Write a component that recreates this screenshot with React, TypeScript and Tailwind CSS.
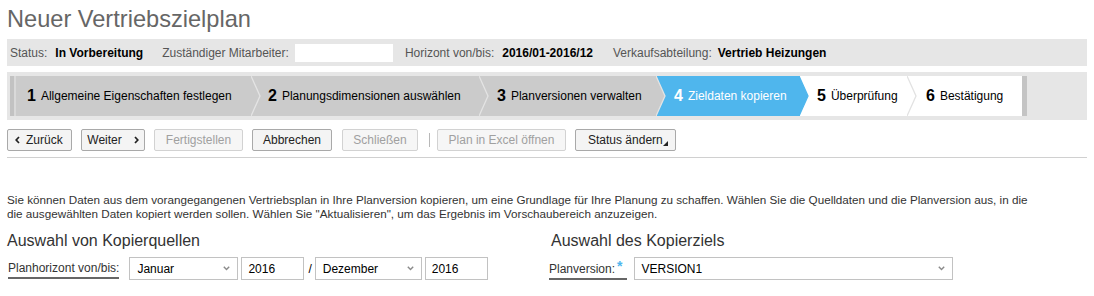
import React from "react";

type StepDef = {
  n: string;
  label: string;
  cls: string;
  fill?: string;
  stroke?: string;
};

const steps: StepDef[] = [
  { n: "1", label: "Allgemeine Eigenschaften festlegen", cls: "w-[236px] bg-[#cbcbcb] text-black pl-[11px]", fill: "#cbcbcb", stroke: "#e4e4e4" },
  { n: "2", label: "Planungsdimensionen auswählen", cls: "w-[228px] bg-[#cbcbcb] text-black pl-[16px]", fill: "#cbcbcb", stroke: "#e4e4e4" },
  { n: "3", label: "Planversionen verwalten", cls: "w-[177px] bg-[#cbcbcb] text-black pl-[17px]", fill: "#cbcbcb", stroke: "#e4e4e4" },
  { n: "4", label: "Zieldaten kopieren", cls: "w-[143px] bg-[#4fb6ed] text-white pl-[17px]", fill: "#4fb6ed", stroke: "#4fb6ed" },
  { n: "5", label: "Überprüfung", cls: "w-[108px] bg-white text-black pl-[17px]", fill: "#ffffff", stroke: "#e2e2e2" },
  { n: "6", label: "Bestätigung", cls: "w-[114px] bg-white text-black pl-[18px]" },
];

function Step({ s }: { s: StepDef }) {
  return (
    <div className={`relative h-[40px] flex items-center shrink-0 ${s.cls}`}>
      <span className="text-[16px] font-bold leading-none mr-[5px]">{s.n}</span>
      <span className="text-[12px] leading-none">{s.label}</span>
      {s.fill && (
        <svg className="absolute right-[-9px] top-0 z-10" width="10" height="40" viewBox="0 0 10 40">
          <polygon points="0,0 9,20 0,40" fill={s.fill} />
          <polyline points="0,0 9,20 0,40" fill="none" stroke={s.stroke} strokeWidth="1.3" />
        </svg>
      )}
    </div>
  );
}

function Btn({
  children,
  cls,
  disabled,
}: {
  children: React.ReactNode;
  cls: string;
  disabled?: boolean;
}) {
  return (
    <div
      className={`relative h-[22px] flex items-center justify-center rounded-[2px] border text-[12px] shrink-0 ${
        disabled
          ? "border-[#d2d2d2] bg-[#f6f6f6] text-[#a0a0a0]"
          : "border-[#a9a9a9] bg-[#f4f4f4] text-[#222]"
      } ${cls}`}
    >
      {children}
    </div>
  );
}

function SmallChevron({ dir }: { dir: "l" | "r" }) {
  return (
    <svg width="5" height="8" viewBox="0 0 5 8">
      <path
        d={dir === "l" ? "M4 1 L1.2 4 L4 7" : "M1 1 L3.8 4 L1 7"}
        fill="none"
        stroke="#222"
        strokeWidth="1.7"
      />
    </svg>
  );
}

function DropChevron() {
  return (
    <svg width="7" height="5" viewBox="0 0 7 5">
      <path d="M0.8 0.8 L3.5 3.6 L6.2 0.8" fill="none" stroke="#8a8a8a" strokeWidth="1.4" />
    </svg>
  );
}

function Select({ value, cls }: { value: string; cls: string }) {
  return (
    <div className={`h-[23px] border border-[#c2c2c2] bg-white flex items-center justify-between pl-[7px] pr-[7px] text-[12px] text-black shrink-0 ${cls}`}>
      <span>{value}</span>
      <DropChevron />
    </div>
  );
}

function Input({ value, cls }: { value: string; cls: string }) {
  return (
    <div className={`h-[23px] border border-[#c2c2c2] bg-white flex items-center pl-[6px] text-[12px] text-black shrink-0 ${cls}`}>
      {value}
    </div>
  );
}

export default function App() {
  return (
    <div className="w-[1094px] h-[296px] bg-white overflow-hidden font-['Liberation_Sans',Arial,sans-serif] text-[#333] px-[7px]">
      <h1 className="pt-[5px] text-[23.6px] leading-[28px] text-[#666] font-normal">
        Neuer Vertriebszielplan
      </h1>

      <div className="mt-[6px] h-[27px] bg-[#e6e6e6] flex items-center pl-[3px] text-[12px]">
        <span className="text-[#555]">Status:</span>
        <span className="ml-[8px] font-bold text-black">In Vorbereitung</span>
        <span className="ml-[19px] text-[#555]">Zuständiger Mitarbeiter:</span>
        <span className="ml-[6px] w-[98px] h-[18px] bg-white"></span>
        <span className="ml-[12px] text-[#555]">Horizont von/bis:</span>
        <span className="ml-[8px] font-bold text-black">2016/01-2016/12</span>
        <span className="ml-[20px] text-[#555]">Verkaufsabteilung:</span>
        <span className="ml-[6px] font-bold text-black">Vertrieb Heizungen</span>
      </div>

      <div className="mt-[6px] h-[48px] bg-[#e6e6e6] flex items-center pl-[3px]">
        <div className="w-[4px] h-[40px] bg-[#c2c2c2] shrink-0"></div>
        <div className="w-[2px] h-[40px] bg-[#d9d9d9] shrink-0"></div>
        {steps.map((s) => (
          <Step key={s.n} s={s} />
        ))}
        <div className="w-[5px] h-[40px] bg-[#c4c4c4] shrink-0"></div>
      </div>

      <div className="mt-[9px] flex items-center">
        <Btn cls="w-[65px] gap-[6px] !justify-start pl-[7px]">
          <SmallChevron dir="l" />
          <span>Zurück</span>
        </Btn>
        <Btn cls="ml-[9px] w-[64px] gap-[12px]">
          <span>Weiter</span>
          <SmallChevron dir="r" />
        </Btn>
        <Btn cls="ml-[9px] w-[89px]" disabled>
          Fertigstellen
        </Btn>
        <Btn cls="ml-[9px] w-[80px]">Abbrechen</Btn>
        <Btn cls="ml-[10px] w-[76px]" disabled>
          Schließen
        </Btn>
        <div className="ml-[11px] w-px h-[14px] bg-[#b8b8b8] shrink-0"></div>
        <Btn cls="ml-[7px] w-[129px]" disabled>
          Plan in Excel öffnen
        </Btn>
        <Btn cls="ml-[9px] w-[101px] !justify-start pl-[12px]">
          <span>Status ändern</span>
          <svg className="absolute right-[7px] bottom-[4px]" width="5" height="5" viewBox="0 0 5 5">
            <polygon points="5,0 5,5 0,5" fill="#222" />
          </svg>
        </Btn>
      </div>

      <div className="mt-[6px] border-t border-[#d0d0d0]"></div>

      <p className="mt-[35px] text-[11.7px] leading-[14px] text-[#333]">
        Sie können Daten aus dem vorangegangenen Vertriebsplan in Ihre Planversion kopieren, um eine Grundlage für Ihre Planung zu schaffen. Wählen Sie die Quelldaten und die Planversion aus, in die
        <br />
        die ausgewählten Daten kopiert werden sollen. Wählen Sie "Aktualisieren", um das Ergebnis im Vorschaubereich anzuzeigen.
      </p>

      <div className="mt-[10px] flex">
        <div className="w-[542px] shrink-0">
          <h2 className="text-[16px] leading-[20px] text-[#333] font-normal">Auswahl von Kopierquellen</h2>
          <div className="mt-[6px] flex items-center">
            <span className="ml-[1px] text-[12px] leading-[14px] text-[#333] border-b-2 border-[#666] pt-[3px] pb-[2px]">
              Planhorizont von/bis:
            </span>
            <Select value="Januar" cls="ml-[10px] w-[109px]" />
            <Input value="2016" cls="ml-[3px] w-[63px]" />
            <span className="ml-[4px] text-[12px] text-black">/</span>
            <Select value="Dezember" cls="ml-[3px] w-[107px]" />
            <Input value="2016" cls="ml-[3px] w-[63px]" />
          </div>
        </div>
        <div className="flex-1">
          <h2 className="ml-[2px] text-[16px] leading-[20px] text-[#333] font-normal">Auswahl des Kopierziels</h2>
          <div className="mt-[6px] flex items-center">
            <span className="text-[12px] leading-[14px] text-[#333] border-b-2 border-[#666] pt-[3px] pb-[2px] pr-[4px]">
              Planversion:
              <span className="ml-[2px] text-[#4fb6ed] font-bold text-[14px] leading-none relative top-[-2px]">*</span>
            </span>
            <Select value="VERSION1" cls="ml-[7px] w-[319px]" />
          </div>
        </div>
      </div>
    </div>
  );
}
